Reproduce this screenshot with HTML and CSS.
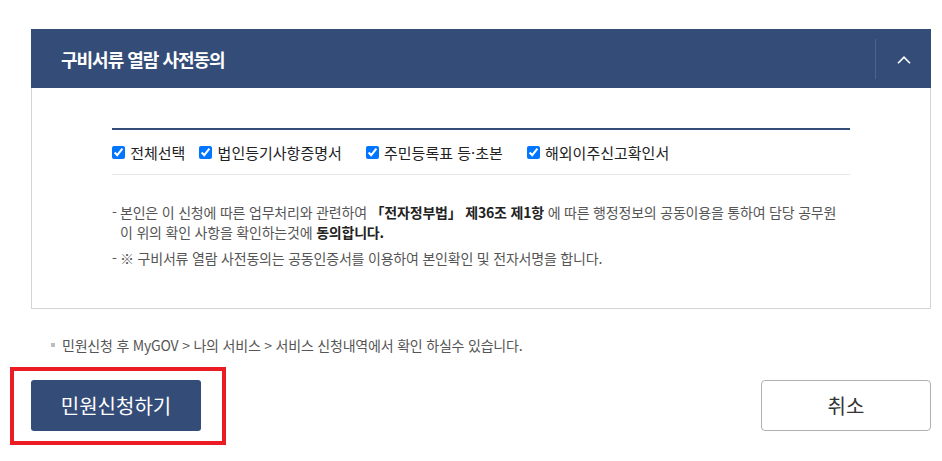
FILE: index.html
```html
<!DOCTYPE html>
<html lang="ko">
<head>
  <meta charset="UTF-8" />
  <meta name="viewport" content="width=device-width, initial-scale=1.0"/>
  <title>구비서류 열람 사전동의</title>
  <link rel="stylesheet" href="styles.css">
</head>
<body>
  <div class="page">
    <div class="acc-head">
      <h3 class="acc-title">구비서류 열람 사전동의</h3>
      <button class="acc-toggle" aria-label="접기">
        <svg width="14" height="8" viewBox="0 0 14 8"><path d="M1 7.2 L7 1.2 L13 7.2" fill="none" stroke="#fff" stroke-width="1.6"/></svg>
      </button>
    </div>

    <div class="acc-body">
      <div class="check-row">
        <label class="check-item first"><input type="checkbox" checked> 전체선택</label>
        <label class="check-item"><input type="checkbox" checked> 법인등기사항증명서</label>
        <label class="check-item"><input type="checkbox" checked> 주민등록표 등·초본</label>
        <label class="check-item"><input type="checkbox" checked> 해외이주신고확인서</label>
      </div>

      <ul class="agree-list">
        <li>본인은 이 신청에 따른 업무처리와 관련하여 <b>「전자정부법」 제36조 제1항</b> 에 따른 행정정보의 공동이용을 통하여 담당 공무원이 위의 확인 사항을 확인하는것에 <b>동의합니다.</b></li>
        <li>※ 구비서류 열람 사전동의는 공동인증서를 이용하여 본인확인 및 전자서명을 합니다.</li>
      </ul>
    </div>

    <p class="info">민원신청 후 MyGOV &gt; 나의 서비스 &gt; 서비스 신청내역에서 확인 하실수 있습니다.</p>

    <div class="btn-row">
      <div class="btn-mark">
        <button class="btn btn-primary">민원신청하기</button>
        <span class="highlight"></span>
      </div>
      <button class="btn btn-line">취소</button>
    </div>
  </div>
</body>
</html>
```

FILE: styles.css
```css
body {
  margin: 0;
  background: #fff;
  font-family: "Noto Sans CJK KR", "Noto Sans", sans-serif;
  color: #333;
}

.page {
  padding: 29px 11px 30px 31px;
}

/* accordion header */
.acc-head {
  height: 59px;
  background: #344c78;
  display: flex;
  align-items: center;
  padding-left: 30px;
}

.acc-title {
  flex: 1;
  margin: 0;
  color: #fff;
  font-size: 18px;
  font-weight: bold;
  letter-spacing: -1px;
}

.acc-toggle {
  width: 56px;
  height: 40px;
  border: none;
  border-left: 1px solid #4b6391;
  background: transparent;
  display: flex;
  align-items: center;
  justify-content: center;
  padding: 2px 0 0;
  cursor: pointer;
}

.acc-body {
  border: 1px solid #d4d4d4;
  border-top: none;
  padding: 40px 80px 40px;
}

.check-row {
  display: flex;
  align-items: center;
  height: 44px;
  border-top: 2px solid #344c78;
  border-bottom: 1px solid #e8e8e8;
}

.check-item {
  display: flex;
  align-items: center;
  font-size: 15px;
  color: #222;
  margin-left: 24px;
  white-space: pre;
}

.check-item.first {
  margin-left: 0;
  margin-right: -10px;
}

.check-item input {
  width: 13px;
  height: 13px;
  margin: 0 1px 0 0;
  accent-color: #0075ff;
}

.agree-list {
  list-style: none;
  margin: 27px 0 0;
  padding: 0;
  font-size: 14px;
  line-height: 20px;
  color: #555;
  letter-spacing: -0.2px;
}

.agree-list li {
  position: relative;
  padding: 0 10px 0 8px;
  margin-bottom: 6px;
}

.agree-list li:last-child {
  margin-bottom: 0;
}

.agree-list li::before {
  content: "-";
  position: absolute;
  left: 0;
}

.agree-list b {
  color: #222;
}

.info {
  margin: 26px 0 0;
  padding-left: 20px;
  font-size: 14px;
  line-height: 20px;
  color: #555;
  letter-spacing: -0.2px;
  display: flex;
  align-items: center;
}

.info::before {
  content: "";
  width: 4px;
  height: 4px;
  background: #bdbdbd;
  margin-right: 7px;
}

.btn-row {
  display: flex;
  justify-content: space-between;
  margin-top: 25px;
}

.btn {
  width: 170px;
  height: 51px;
  font-family: inherit;
  font-size: 20px;
  border-radius: 3px;
  cursor: pointer;
}

.btn-primary {
  background: #344c78;
  color: #fff;
  border: none;
}

.btn-line {
  background: #fff;
  color: #333;
  border: 1px solid #b0b0b0;
  border-radius: 4px;
}

.btn-mark {
  position: relative;
}

.btn-mark .btn {
  display: block;
}

.highlight {
  position: absolute;
  left: -21px;
  top: -13px;
  width: 208px;
  height: 70px;
  border: 4px solid #ec1c24;
  pointer-events: none;
}
```
